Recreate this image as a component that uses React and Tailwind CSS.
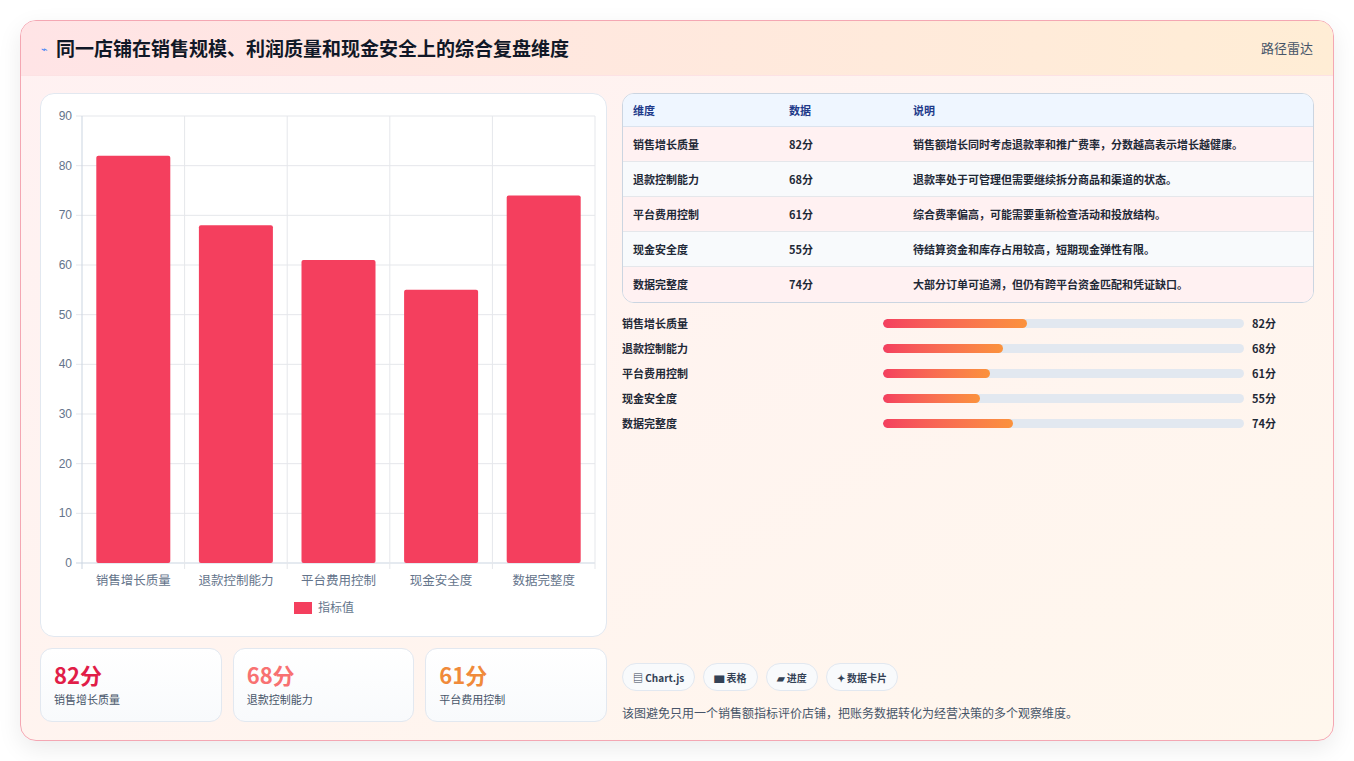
import React from "react";

const data = [
  ["销售增长质量", 82, "销售额增长同时考虑退款率和推广费率，分数越高表示增长越健康。"],
  ["退款控制能力", 68, "退款率处于可管理但需要继续拆分商品和渠道的状态。"],
  ["平台费用控制", 61, "综合费率偏高，可能需要重新检查活动和投放结构。"],
  ["现金安全度", 55, "待结算资金和库存占用较高，短期现金弹性有限。"],
  ["数据完整度", 74, "大部分订单可追溯，但仍有跨平台资金匹配和凭证缺口。"],
];

function Chart() {
  const L = 41, R = 554, T = 22, B = 469;
  const cw = (R - L) / 5;
  const y = (v) => B - (v / 90) * (B - T);
  return (
    <svg width="566" height="543" className="block">
      {[0,10,20,30,40,50,60,70,80,90].map((v) => (
        <g key={v}>
          <line x1={L - 6} x2={R} y1={y(v)} y2={y(v)} stroke={v === 0 ? "#cbd5e1" : "#e5e7eb"} />
          <text x={L - 10} y={y(v) + 4} textAnchor="end" fontSize="12" fill="#64748b" fontFamily="Liberation Sans, sans-serif">{v}</text>
        </g>
      ))}
      {[0,1,2,3,4,5].map((i) => (
        <line key={i} x1={L + i * cw} x2={L + i * cw} y1={T} y2={B + 6} stroke={i === 0 ? "#cbd5e1" : "#e5e7eb"} />
      ))}
      {data.map(([n, v], i) => (
        <g key={n}>
          <rect x={L + i * cw + (cw - 74) / 2} y={y(v)} width="74" height={B - y(v)} rx="2" fill="#f43f5e" />
          <text x={L + i * cw + cw / 2} y={491} textAnchor="middle" fontSize="12.5" fill="#64748b" fontFamily="Noto Sans CJK SC, sans-serif">{n}</text>
        </g>
      ))}
      <rect x="253" y="508" width="18" height="12" fill="#f43f5e" />
      <text x="277" y="518" fontSize="12" fill="#64748b" fontFamily="Noto Sans CJK SC, sans-serif">指标值</text>
    </svg>
  );
}

export default function App() {
  const font = { fontFamily: "'Noto Sans CJK SC', 'Noto Sans', sans-serif" };
  return (
    <div className="w-[1354px] h-[761px] bg-white pt-[20px] pl-[20px]" style={font}>
      <div className="w-[1314px] h-[721px] rounded-[16px] border border-[#f4a7b3] bg-gradient-to-br from-[#fff1f2] to-[#fff7ed] shadow-[0_8px_24px_rgba(0,0,0,0.08)] overflow-hidden flex flex-col">
        <div className="h-[55px] flex items-center justify-between px-[20px] bg-gradient-to-r from-[#ffe4e6] to-[#ffedd5] border-b border-[#fde2e4]">
          <div className="flex items-center gap-[8px]">
            <span className="text-[11px] text-[#3b82f6]">⌁</span>
            <span className="text-[19px] font-bold text-[#111827]">同一店铺在销售规模、利润质量和现金安全上的综合复盘维度</span>
          </div>
          <span className="text-[13px] text-[#475569]">路径雷达</span>
        </div>
        <div className="flex gap-[15px] px-[19px] pt-[17px]">
          <div className="w-[567px] flex flex-col gap-[11px]">
            <div className="h-[544px] rounded-[14px] border border-[#e2e8f0] bg-white overflow-hidden">
              <Chart />
            </div>
            <div className="grid grid-cols-3 gap-[11px]">
              {[["82分","text-[#e11d48]","销售增长质量"],["68分","text-[#f87171]","退款控制能力"],["61分","text-[#f08a3a]","平台费用控制"]].map(([v,c,l]) => (
                <div key={l} className="h-[74px] rounded-[12px] border border-[#e2e8f0] bg-gradient-to-b from-white to-[#f8fafc] px-[13px] pt-[10px]">
                  <div className={`text-[22px] font-bold leading-[30px] ${c}`}>{v}</div>
                  <div className="text-[11px] text-[#475569] mt-[2px]">{l}</div>
                </div>
              ))}
            </div>
          </div>
          <div className="w-[694px] flex flex-col">
            <div className="rounded-[12px] border border-[#cbd5e1] overflow-hidden bg-white">
              <div className="h-[33px] flex items-center bg-[#eff6ff] border-b border-[#dbe3ee] text-[11px] font-bold text-[#1e3a8a]">
                <span className="w-[166px] pl-[10px]">维度</span><span className="w-[124px]">数据</span><span>说明</span>
              </div>
              {data.map(([n, v, d], i) => (
                <div key={n} className={`h-[35px] flex items-center text-[11px] font-semibold text-[#1f2937] ${i % 2 === 0 ? "bg-[#fff1f2]" : "bg-[#f8fafc]"} ${i < 4 ? "border-b border-[#e5e7eb]" : ""}`}>
                  <span className="w-[166px] pl-[10px]">{n}</span><span className="w-[124px]">{v}分</span><span>{d}</span>
                </div>
              ))}
            </div>
            <div className="mt-[11px] flex flex-col gap-[7px]">
              {data.map(([n, v]) => (
                <div key={n} className="h-[18px] flex items-center text-[11px] font-semibold text-[#1f2937]">
                  <span className="w-[261px]">{n}</span>
                  <div className="w-[361px] h-[9px] rounded-full bg-[#e2e8f0] overflow-hidden">
                    <div className="h-full rounded-full bg-gradient-to-r from-[#f43f5e] to-[#fb923c]" style={{ width: `${v / 2.05}%` }} />
                  </div>
                  <span className="ml-[8px] font-bold">{v}分</span>
                </div>
              ))}
            </div>
            <div className="mt-auto mb-[2px] flex gap-[8px]">
              {["▤ Chart.js","▆ 表格","▰ 进度","✦ 数据卡片"].map((t) => (
                <span key={t} className="h-[28px] px-[10px] flex items-center rounded-full border border-[#e2e8f0] bg-[#f8fafc] text-[10px] font-bold text-[#334155]">{t}</span>
              ))}
            </div>
            <div className="mt-[11px] text-[12px] text-[#475569]">该图避免只用一个销售额指标评价店铺，把账务数据转化为经营决策的多个观察维度。</div>
          </div>
        </div>
      </div>
    </div>
  );
}
